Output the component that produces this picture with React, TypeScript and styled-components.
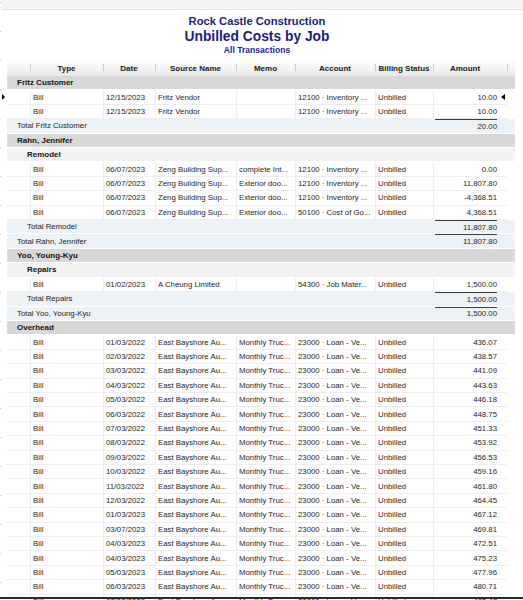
import React from "react"
import styled, { createGlobalStyle } from "styled-components"

type Bill = { date: string, source: string, memo: string, account: string, amount: string }
type Line =
    | { kind: "group", label: string, level: number }
    | { kind: "bill", bill: Bill }
    | { kind: "total", label: string, level: number, amount: string }

const GlobalStyle = createGlobalStyle`
    html, body {
        margin: 0;
        padding: 0;
        height: 600px;
        overflow: hidden;
        background: #fff;
    }
    body {
        font-family: "Liberation Sans", Arial, sans-serif;
        color: #1e1e1e;
    }
`

const inv = "12100 · Inventory ..."
const loan = "23000 · Loan - Ve..."

const overheadDates = [
    "01/03/2022", "02/03/2022", "03/03/2022", "04/03/2022", "05/03/2022", "06/03/2022",
    "07/03/2022", "08/03/2022", "09/03/2022", "10/03/2022", "11/03/2022", "12/03/2022",
    "01/03/2023", "03/07/2023", "04/03/2023", "04/03/2023", "05/03/2023", "06/03/2023", "07/03/2023",
]
const overheadAmounts = [
    "436.07", "438.57", "441.09", "443.63", "446.18", "448.75", "451.33", "453.92", "456.53",
    "459.16", "461.80", "464.45", "467.12", "469.81", "472.51", "475.23", "477.96", "480.71", "483.47",
]

const lines: Line[] = [
    { kind: "group", label: "Fritz Customer", level: 0 },
    { kind: "bill", bill: { date: "12/15/2023", source: "Fritz Vendor", memo: "", account: inv, amount: "10.00" } },
    { kind: "bill", bill: { date: "12/15/2023", source: "Fritz Vendor", memo: "", account: inv, amount: "10.00" } },
    { kind: "total", label: "Total Fritz Customer", level: 0, amount: "20.00" },
    { kind: "group", label: "Rahn, Jennifer", level: 0 },
    { kind: "group", label: "Remodel", level: 1 },
    { kind: "bill", bill: { date: "06/07/2023", source: "Zeng Building Sup...", memo: "complete Int...", account: inv, amount: "0.00" } },
    { kind: "bill", bill: { date: "06/07/2023", source: "Zeng Building Sup...", memo: "Exterior doo...", account: inv, amount: "11,807.80" } },
    { kind: "bill", bill: { date: "06/07/2023", source: "Zeng Building Sup...", memo: "Exterior doo...", account: inv, amount: "-4,368.51" } },
    { kind: "bill", bill: { date: "06/07/2023", source: "Zeng Building Sup...", memo: "Exterior doo...", account: "50100 · Cost of Go...", amount: "4,368.51" } },
    { kind: "total", label: "Total Remodel", level: 1, amount: "11,807.80" },
    { kind: "total", label: "Total Rahn, Jennifer", level: 0, amount: "11,807.80" },
    { kind: "group", label: "Yoo, Young-Kyu", level: 0 },
    { kind: "group", label: "Repairs", level: 1 },
    { kind: "bill", bill: { date: "01/02/2023", source: "A Cheung Limited", memo: "", account: "54300 · Job Mater...", amount: "1,500.00" } },
    { kind: "total", label: "Total Repairs", level: 1, amount: "1,500.00" },
    { kind: "total", label: "Total Yoo, Young-Kyu", level: 0, amount: "1,500.00" },
    { kind: "group", label: "Overhead", level: 0 },
    ...overheadDates.map((date, i): Line => ({
        kind: "bill",
        bill: { date, source: "East Bayshore Au...", memo: "Monthly Truc...", account: loan, amount: overheadAmounts[i] },
    })),
]

const columns = "23px 73px 52px 81px 59px 80px 58px 74px 8px"

export default function App() {
    return (
        <>
            <GlobalStyle />
            <Page>
                <TopStrip />
                <Content>
                    <Titles>
                        <Company>Rock Castle Construction</Company>
                        <ReportName>Unbilled Costs by Job</ReportName>
                        <Basis>All Transactions</Basis>
                    </Titles>
                    <Table>
                        <HeaderRow>
                            <HeadCell />
                            <HeadCell $sep>Type</HeadCell>
                            <HeadCell $sep>Date</HeadCell>
                            <HeadCell $sep>Source Name</HeadCell>
                            <HeadCell $sep>Memo</HeadCell>
                            <HeadCell $sep>Account</HeadCell>
                            <HeadCell $sep>Billing Status</HeadCell>
                            <HeadCell $sep $pad>Amount</HeadCell>
                            <HeadCell $sep />
                        </HeaderRow>
                        {lines.map((line, i) => {
                            if (line.kind === "group") {
                                return <GroupRow key={i} $level={line.level}>{line.label}</GroupRow>
                            }
                            if (line.kind === "total") {
                                return (
                                    <TotalRow key={i}>
                                        <TotalLabel $level={line.level}>{line.label}</TotalLabel>
                                        <Amount><Underlined>{line.amount}</Underlined></Amount>
                                        <span />
                                    </TotalRow>
                                )
                            }
                            const b = line.bill
                            return (
                                <BillRow key={i}>
                                    {i === 1 && <RowMarker />}
                                    <Cell />
                                    <Cell $line>Bill</Cell>
                                    <Cell $line>{b.date}</Cell>
                                    <Cell $line>{b.source}</Cell>
                                    <Cell $line>{b.memo}</Cell>
                                    <Cell $line>{b.account}</Cell>
                                    <Cell $line>Unbilled</Cell>
                                    <Amount $line>{b.amount}</Amount>
                                    <Tail>{i === 1 && <AmountMarker />}</Tail>
                                </BillRow>
                            )
                        })}
                    </Table>
                </Content>
                <WindowEdge />
            </Page>
        </>
    )
}

const Page = styled.div`
    position: relative;
    height: 600px;
    overflow: hidden;
    background-image: linear-gradient(to bottom, #c2c2c2 1px, transparent 1px);
    background-size: 1px 29px;
    background-repeat: repeat-y;
    background-position: 0 2px;
`
const TopStrip = styled.div`
    height: 9px;
    margin-left: 1px;
    background: #f4f4f4;
    border-bottom: 1px solid #e3e3e3;
`
const Content = styled.div`
    padding-left: 7px;
    display: flex;
    flex-direction: column;
`
const Titles = styled.div`
    width: 500px;
    padding: 4px 0 4px;
    display: flex;
    flex-direction: column;
    align-items: center;
    color: #1c1c7a;
    font-weight: bold;
`
const Company = styled.div`
    font-size: 11.2px;
    line-height: 14px;
`
const ReportName = styled.div`
    font-size: 13.8px;
    line-height: 17px;
`
const Basis = styled.div`
    font-size: 8.6px;
    line-height: 11px;
    color: #24249a;
`
const Table = styled.div`
    width: 508px;
    display: flex;
    flex-direction: column;
`
const HeaderRow = styled.div`
    display: grid;
    grid-template-columns: ${columns};
    height: 16px;
    background: linear-gradient(to bottom, #fdfdfd, #e8e8e8);
`
const HeadCell = styled.div<{ $sep?: boolean, $pad?: boolean }>`
    position: relative;
    display: flex;
    align-items: center;
    justify-content: center;
    padding-right: ${p => (p.$pad ? "10px" : "0")};
    font-size: 8px;
    font-weight: bold;
    color: #1a1a1a;
    white-space: nowrap;

    &::before {
        content: "";
        display: ${p => (p.$sep ? "block" : "none")};
        position: absolute;
        left: 0;
        top: 4px;
        height: 7px;
        border-left: 1px dotted #b0b0b0;
    }
`
const GroupRow = styled.div<{ $level: number }>`
    box-sizing: border-box;
    height: 14.42px;
    display: flex;
    align-items: center;
    padding-left: ${p => (p.$level ? 20 : 10)}px;
    background: ${p => (p.$level ? "#f2f2f2" : "#d8d8d8")};
    border-bottom: 1px solid #fff;
    font-size: 8px;
    font-weight: bold;
    color: #141414;
`
const BillRow = styled.div`
    position: relative;
    box-sizing: border-box;
    height: 14.42px;
    display: grid;
    grid-template-columns: ${columns};
    background: #fff;
    font-size: 7.8px;
`
const Cell = styled.div<{ $line?: boolean }>`
    display: flex;
    align-items: center;
    padding-left: 2px;
    border-left: ${p => (p.$line ? "1px solid #ececec" : "none")};
    border-bottom: 1px solid #eeeeee;
    white-space: nowrap;
    overflow: hidden;
`
const Amount = styled.div<{ $line?: boolean }>`
    display: flex;
    align-items: stretch;
    justify-content: flex-end;
    padding: 0 10px 0 2px;
    border-left: ${p => (p.$line ? "1px solid #ececec" : "none")};
    border-bottom: ${p => (p.$line ? "1px solid #eeeeee" : "none")};
    white-space: nowrap;

    & > *, &:not(:has(*)) {
        display: flex;
        align-items: center;
    }
`
const Tail = styled.div`
    position: relative;
`
const TotalRow = styled.div`
    box-sizing: border-box;
    height: 14.42px;
    display: grid;
    grid-template-columns: 426px 74px 8px;
    background: #edf2f7;
    border-bottom: 1px solid #fff;
    font-size: 7.8px;
`
const TotalLabel = styled.div<{ $level: number }>`
    display: flex;
    align-items: center;
    padding-left: ${p => (p.$level ? 20 : 10)}px;
    color: #222;
`
const Underlined = styled.span`
    flex: 1;
    justify-content: flex-end;
    border-top: 1px solid #3c3c3c;
`
const RowMarker = styled.span`
    position: absolute;
    left: -5px;
    top: 4px;
    width: 0;
    height: 0;
    border-left: 3px solid #000;
    border-top: 3px solid transparent;
    border-bottom: 3px solid transparent;
`
const AmountMarker = styled.span`
    position: absolute;
    left: -6px;
    top: 3.5px;
    width: 0;
    height: 0;
    border-right: 4px solid #000;
    border-top: 3.5px solid transparent;
    border-bottom: 3.5px solid transparent;
`
const WindowEdge = styled.div`
    position: absolute;
    left: 0;
    right: 0;
    top: 597px;
    height: 2px;
    background: #2a2a2a;
`
